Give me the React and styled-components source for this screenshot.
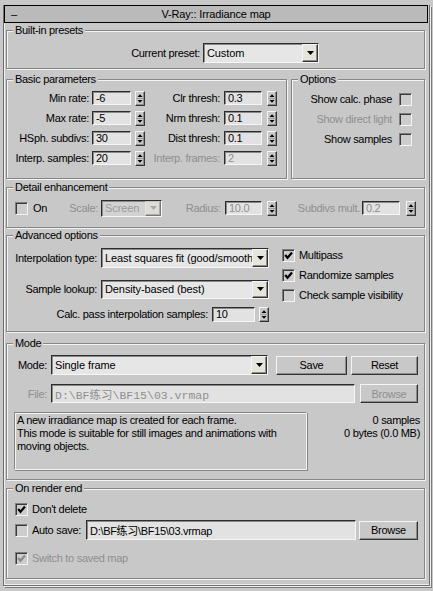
import React from 'react';
import styled, { createGlobalStyle, css } from 'styled-components';

const BG = '#c8c8c8';

const GlobalStyle = createGlobalStyle`
  html, body {
    margin: 0;
    padding: 0;
    background: ${BG};
  }
  body {
    font-family: 'Liberation Sans', Arial, 'Noto Sans CJK SC', sans-serif;
    font-size: 11px;
    letter-spacing: -0.3px;
    color: #000;
  }
`;

const sunken = css`
  border-style: solid;
  border-width: 1px;
  border-color: #2c2c2c #f6f6f6 #f6f6f6 #2c2c2c;
  box-shadow: inset 1px 1px 0 #8a8a8a;
`;

const raised = css`
  border-style: solid;
  border-width: 1px;
  border-color: #f4f4f4 #333 #333 #f4f4f4;
  box-shadow: inset -1px -1px 0 #8c8c8c;
`;

const Page = styled.div`
  width: 433px;
  height: 591px;
  padding-top: 5px;
  box-sizing: border-box;
  overflow: hidden;
`;

const Rollout = styled.div`
  box-sizing: border-box;
  width: 427px;
  height: 581px;
  margin-left: 3px;
  border: 1px solid #6e6e6e;
  border-top: 0;
  box-shadow: 1px 1px 0 #efefef, 2px 2px 0 #7a7a7a, inset 1px -1px 0 #efefef;
`;

const TitleBar = styled.div`
  box-sizing: border-box;
  width: 424px;
  height: 18px;
  border: 1px solid #000;
  background: #bababa;
  display: grid;
  grid-template-columns: 1fr auto 1fr;
  align-items: center;
  padding: 0 6px;
  letter-spacing: -0.15px;
`;

const Collapse = styled.span`
  line-height: 14px;
`;

const Group = styled.div`
  box-sizing: border-box;
  flex: none;
  width: ${p => p.$w || 419}px;
  height: ${p => p.$h}px;
  margin: ${p => p.$mt || 0}px 0 0 ${p => p.$ml ?? 2}px;
  border: 1px solid #868686;
  box-shadow: inset 1px 1px 0 #f2f2f2, 1px 1px 0 #f2f2f2;
`;

const GroupPair = styled.div`
  display: flex;
  gap: 4px;
  margin: 10px 0 0 2px;
`;

const Legend = styled.div`
  display: table;
  height: 13px;
  line-height: 13px;
  margin: -7px 0 0 6px;
  padding: 0 2px;
  background: ${BG};
`;

const Row = styled.div`
  display: flex;
  align-items: center;
  height: ${p => p.$h || 20}px;
  margin-top: ${p => p.$mt || 0}px;
  padding-left: ${p => p.$pl || 0}px;
  padding-right: ${p => p.$pr || 0}px;
  justify-content: ${p => (p.$end ? 'flex-end' : 'flex-start')};
`;

const Label = styled.span`
  flex: none;
  width: ${p => (p.$w ? `${p.$w}px` : 'auto')};
  text-align: ${p => (p.$right ? 'right' : 'left')};
  margin-left: ${p => p.$ml || 0}px;
  margin-right: ${p => p.$mr ?? 0}px;
  color: ${p => (p.$off ? '#8f8f8f' : '#000')};
  white-space: nowrap;
`;

const Field = styled.div`
  flex: none;
  box-sizing: border-box;
  width: ${p => p.$w}px;
  height: ${p => p.$h || 14}px;
  margin-left: ${p => p.$ml || 0}px;
  background: #e2e2e2;
  ${sunken};
  padding-left: 3px;
  display: flex;
  align-items: center;
  overflow: hidden;
  white-space: nowrap;
  color: ${p => (p.$off ? '#8f8f8f' : '#000')};
  font-family: ${p => (p.$mono ? "'Liberation Mono', 'Noto Sans CJK SC', monospace" : 'inherit')};
  font-size: ${p => (p.$mono ? '11.5px' : '11px')};
  letter-spacing: ${p => (p.$mono ? '0' : '-0.3px')};
`;

const SpinBox = styled.div`
  flex: none;
  box-sizing: border-box;
  width: 10px;
  height: 15px;
  margin-left: ${p => p.$ml || 0}px;
  background: ${BG};
  ${raised};
  display: flex;
`;

const Spinner = ({ ml }) => (
  <SpinBox $ml={ml}>
    <svg width="8" height="13" viewBox="0 0 8 13">
      <polygon points="1.5,5 4,2.2 6.5,5" fill="#000" />
      <line x1="0" y1="6.5" x2="8" y2="6.5" stroke="#9a9a9a" strokeWidth="1" />
      <polygon points="1.5,8 4,10.8 6.5,8" fill="#000" />
    </svg>
  </SpinBox>
);

const SelectBox = styled.div`
  flex: none;
  box-sizing: border-box;
  width: ${p => p.$w}px;
  height: ${p => p.$h || 20}px;
  background: ${p => (p.$off ? '#d2d2d2' : '#e6e6e6')};
  ${sunken};
  display: flex;
  align-items: center;
  padding-left: 3px;
  color: ${p => (p.$off ? '#9a9a9a' : '#000')};
  white-space: nowrap;
  overflow: hidden;
  letter-spacing: -0.1px;
`;

const SelectText = styled.span`
  flex: 1;
  overflow: hidden;
`;

const ArrowButton = styled.div`
  flex: none;
  box-sizing: border-box;
  width: 16px;
  height: 100%;
  background: #e6e5dc;
  ${raised};
  display: flex;
  align-items: center;
  justify-content: center;
  opacity: ${p => (p.$off ? 0.55 : 1)};
`;

const Select = ({ w, h, off, children }) => (
  <SelectBox $w={w} $h={h} $off={off}>
    <SelectText>{children}</SelectText>
    <ArrowButton $off={off}>
      <svg width="7" height="4" viewBox="0 0 7 4">
        <polygon points="0,0 7,0 3.5,4" fill={off ? '#888' : '#000'} />
      </svg>
    </ArrowButton>
  </SelectBox>
);

const Button = styled.div`
  flex: none;
  box-sizing: border-box;
  width: ${p => p.$w}px;
  height: ${p => p.$h || 19}px;
  margin-left: ${p => p.$ml || 0}px;
  background: ${BG};
  ${raised};
  display: flex;
  align-items: center;
  justify-content: center;
  color: ${p => (p.$off ? '#8f8f8f' : '#000')};
`;

const CheckBox = styled.div`
  flex: none;
  box-sizing: border-box;
  width: 13px;
  height: 13px;
  margin-left: ${p => p.$ml || 0}px;
  background: #cdcdcd;
  border-style: solid;
  border-width: 1px;
  border-color: #7e7e7e #f4f4f4 #f4f4f4 #7e7e7e;
  box-shadow: inset 1px 1px 0 #3a3a3a;
  display: flex;
  align-items: center;
  justify-content: center;
`;

const Check = ({ on, off, ml }) => (
  <CheckBox $ml={ml}>
    {on && (
      <svg width="9" height="9" viewBox="0 0 9 9">
        <polyline
          points="1.2,4 3.5,6.8 8,1.5"
          fill="none"
          stroke={off ? '#8a8a8a' : '#000'}
          strokeWidth="2.2"
        />
      </svg>
    )}
  </CheckBox>
);

const Columns = styled.div`
  display: grid;
  grid-template-columns: 275px 1fr;
`;

const Stack = styled.div`
  display: flex;
  flex-direction: column;
  padding-top: ${p => p.$pt || 0}px;
`;

const InfoRow = styled.div`
  display: flex;
  margin-top: 9px;
  padding: 0 4px 0 7px;
`;

const Description = styled.div`
  box-sizing: border-box;
  width: 293px;
  height: 58px;
  padding: 1px 2px;
  line-height: 13px;
  border: 1px solid #868686;
  border-right-color: #f2f2f2;
  border-bottom-color: #f2f2f2;
  box-shadow: inset 1px 1px 0 #f2f2f2, 1px 1px 0 #868686;
`;

const Stats = styled.div`
  flex: 1;
  text-align: right;
  padding-top: 2px;
  line-height: 13px;
`;

const basicRows = [
  ['Min rate:', '-6', 'Clr thresh:', '0.3', false],
  ['Max rate:', '-5', 'Nrm thresh:', '0.1', false],
  ['HSph. subdivs:', '30', 'Dist thresh:', '0.1', false],
  ['Interp. samples:', '20', 'Interp. frames:', '2', true],
];

const options = [
  ['Show calc. phase', false],
  ['Show direct light', true],
  ['Show samples', false],
];

const advancedChecks = [
  ['Multipass', true],
  ['Randomize samples', true],
  ['Check sample visibility', false],
];

export default function App() {
  return (
    <>
      <GlobalStyle />
      <Page>
        <Rollout>
          <TitleBar>
            <Collapse>–</Collapse>
            <span>V-Ray:: Irradiance map</span>
            <span />
          </TitleBar>

          <Group $mt={7} $h={39}>
            <Legend>Built-in presets</Legend>
            <Row $mt={6}>
              <Label $w={193} $right $mr={3}>Current preset:</Label>
              <Select w={116}>Custom</Select>
            </Row>
          </Group>

          <GroupPair>
            <Group $w={281} $h={100} $ml={0}>
              <Legend>Basic parameters</Legend>
              <Stack $pt={2}>
                {basicRows.map(([a, av, b, bv, off]) => (
                  <Row key={a}>
                    <Label $w={82} $right $mr={3}>{a}</Label>
                    <Field $w={39}>{av}</Field>
                    <Spinner ml={4} />
                    <Label $w={75} $right $mr={4} $off={off}>{b}</Label>
                    <Field $w={38} $off={off}>{bv}</Field>
                    <Spinner ml={5} />
                  </Row>
                ))}
              </Stack>
            </Group>
            <Group $w={134} $h={100} $ml={0}>
              <Legend>Options</Legend>
              <Stack $pt={3}>
                {options.map(([t, off]) => (
                  <Row key={t} $end $pr={12}>
                    <Label $off={off} $mr={7}>{t}</Label>
                    <Check />
                  </Row>
                ))}
              </Stack>
            </Group>
          </GroupPair>

          <Group $mt={8} $h={41}>
            <Legend>Detail enhancement</Legend>
            <Row $mt={4} $pl={8}>
              <Check />
              <Label $w={20} $ml={5}>On</Label>
              <Label $w={45} $right $mr={3} $off>Scale:</Label>
              <Select w={61} h={17} off>Screen</Select>
              <Label $w={59} $right $mr={4} $off>Radius:</Label>
              <Field $w={37} $off>10.0</Field>
              <Spinner ml={5} />
              <Label $w={83} $right $mr={2} $off>Subdivs mult.</Label>
              <Field $w={38} $off>0.2</Field>
              <Spinner ml={6} />
            </Row>
          </Group>

          <Group $mt={7} $h={97}>
            <Legend>Advanced options</Legend>
            <Columns>
              <Stack>
                <Row $mt={6}>
                  <Label $w={90} $right $mr={4}>Interpolation type:</Label>
                  <Select w={168}>Least squares fit (good/smooth)</Select>
                </Row>
                <Row $mt={11}>
                  <Label $w={90} $right $mr={4}>Sample lookup:</Label>
                  <Select w={168} h={19}>Density-based (best)</Select>
                </Row>
                <Row $mt={5}>
                  <Label $w={201} $right $mr={4}>Calc. pass interpolation samples:</Label>
                  <Field $w={43} $h={15}>10</Field>
                  <Spinner ml={4} />
                </Row>
              </Stack>
              <Stack $pt={3}>
                {advancedChecks.map(([t, on]) => (
                  <Row key={t}>
                    <Check on={on} />
                    <Label $ml={4}>{t}</Label>
                  </Row>
                ))}
              </Stack>
            </Columns>
          </Group>

          <Group $mt={11} $h={137}>
            <Legend>Mode</Legend>
            <Row $mt={5}>
              <Label $w={40} $right $mr={4}>Mode:</Label>
              <Select w={217}>Single frame</Select>
              <Button $w={71} $ml={8}>Save</Button>
              <Button $w={67} $ml={4}>Reset</Button>
            </Row>
            <Row $mt={9} $h={19}>
              <Label $w={40} $right $mr={4} $off>File:</Label>
              <Field $w={304} $h={19} $off $mono>D:\BF练习\BF15\03.vrmap</Field>
              <Button $w={58} $ml={5} $off>Browse</Button>
            </Row>
            <InfoRow>
              <Description>
                A new irradiance map is created for each frame.
                <br />
                This mode is suitable for still images and animations with
                <br />
                moving objects.
              </Description>
              <Stats>
                0 samples
                <br />
                0 bytes (0.0 MB)
              </Stats>
            </InfoRow>
          </Group>

          <Group $mt={8} $h={91}>
            <Legend>On render end</Legend>
            <Row $mt={4} $pl={8}>
              <Check on />
              <Label $ml={4}>Don't delete</Label>
            </Row>
            <Row $mt={1} $pl={8}>
              <Check />
              <Label $w={50} $ml={4} $mr={4}>Auto save:</Label>
              <Field $w={270} $h={20}>D:\BF练习\BF15\03.vrmap</Field>
              <Button $w={59} $ml={3}>Browse</Button>
            </Row>
            <Row $mt={8} $pl={8}>
              <Check on off />
              <Label $ml={4} $off>Switch to saved map</Label>
            </Row>
          </Group>
        </Rollout>
      </Page>
    </>
  );
}
